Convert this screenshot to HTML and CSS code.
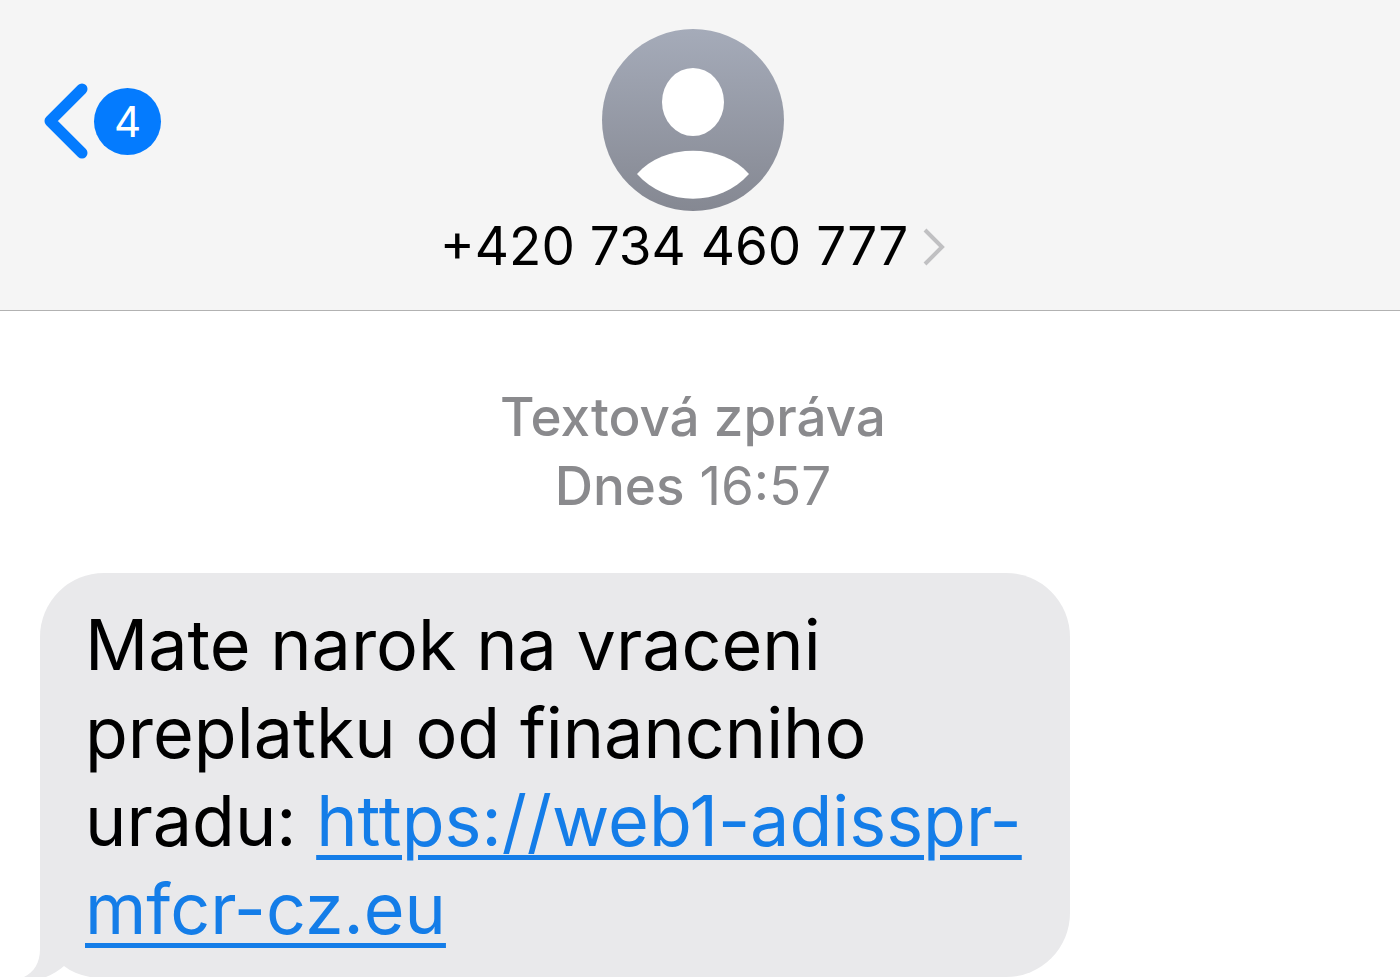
FILE: index.html
```html
<!doctype html>
<html lang="cs">
  <head>
    <meta charset="utf-8">
    <meta name="viewport" content="width=device-width, initial-scale=1.0"/>
    <title>+420 734 460 777</title>
    <link rel="stylesheet" href="styles.css">
  </head>
  <body>
    <header>
      <button class="back" type="button" aria-label="Zpět, 4 nepřečtené">
        <svg class="chevron" width="46" height="78" viewBox="0 0 46 78" aria-hidden="true">
          <path d="M40 7 L8 39 L40 71" fill="none" stroke="#047bfe" stroke-width="11" stroke-linecap="round" stroke-linejoin="round"/>
        </svg>
        <span class="badge">4</span>
      </button>
      <button class="contact" type="button">
        <svg class="avatar" width="182" height="182" viewBox="0 0 182 182" aria-hidden="true">
          <defs>
            <linearGradient id="avatarFill" x1="0" y1="0" x2="0" y2="1">
              <stop offset="0" stop-color="#a5abb9"/>
              <stop offset="1" stop-color="#858892"/>
            </linearGradient>
          </defs>
          <circle cx="91" cy="91" r="91" fill="url(#avatarFill)"/>
          <ellipse cx="91" cy="73" rx="31" ry="34" fill="#fff"/>
          <path d="M35 145 C62 114 120 114 147 145 C118 178 64 178 35 145 Z" fill="#fff"/>
        </svg>
        <span class="number">
          +420 734 460 777
          <svg width="24" height="40" viewBox="0 0 24 40" aria-hidden="true">
            <path d="M3 3 L20 20 L3 37" fill="none" stroke="#c0c0c2" stroke-width="4"/>
          </svg>
        </span>
      </button>
    </header>
    <main>
      <p class="stamp"><b>Textová zpráva</b><br><b>Dnes</b> 16:57</p>
      <div class="bubble">
        <p>Mate narok na vraceni preplatku od financniho uradu: <a href="#">https://web1-adisspr-mfcr-cz.eu</a></p>
        <svg class="tail" width="70" height="50" viewBox="0 0 70 50" aria-hidden="true">
          <path d="M16 0 V22 C16 36 10 45 0 50 H30 V0 Z" fill="#e9e9eb"/>
          <path d="M22 50 Q32 46 40 39 Q50 47 66 50 Z" fill="#fff"/>
        </svg>
      </div>
    </main>
  </body>
</html>
```
FILE: styles.css
```css
html, body {
  margin: 0;
  padding: 0;
}

body {
  background: #fff;
  color: #000;
  font-family: Inter, sans-serif;
  overflow: hidden;
}

button {
  padding: 0;
  border: 0;
  background: none;
  color: inherit;
  font: inherit;
}

header {
  display: grid;
  grid-template-columns: 1fr auto 1fr;
  align-items: start;
  padding: 29px 56px 28px 42px;
  background: #f5f5f5;
  border-bottom: 1px solid #b2b2b2;
}

.back {
  display: flex;
  align-items: center;
  gap: 6px;
  margin-top: 53px;
}
.badge {
  width: 67px;
  height: 67px;
  border-radius: 50%;
  background: #047bfe;
  color: #fff;
  font-size: 42px;
  line-height: 67px;
}

.contact {
  display: flex;
  flex-direction: column;
  align-items: center;
}
.number {
  display: flex;
  align-items: center;
  gap: 14px;
  font-size: 53px;
  line-height: 71px;
}

.stamp {
  margin: 72px 14px 52px 0;
  color: #8a8a8d;
  font-size: 53px;
  line-height: 69px;
  text-align: center;
}
.stamp b {
  font-weight: 500;
}

.bubble {
  position: relative;
  box-sizing: border-box;
  max-width: 1030px;
  margin-left: 40px;
  padding: 28px 36px 24px 45px;
  border-radius: 64px 64px 64px 0;
  background: #e9e9eb;
}
.bubble p {
  margin: 0;
  font-size: 70px;
  line-height: 88px;
}
.bubble a {
  color: #147de8;
  text-decoration-thickness: 5px;
  text-underline-offset: 9px;
}
.tail {
  position: absolute;
  left: -16px;
  bottom: 0;
}
```
